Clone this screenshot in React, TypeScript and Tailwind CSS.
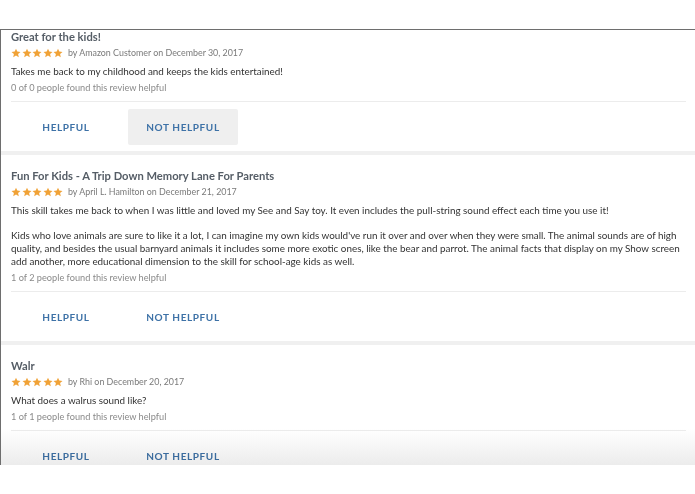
import React from 'react'

type Review = {
  title: string
  author: string
  date: string
  body: string[][]
  helpful: string
  hover?: boolean
}

const reviews: Review[] = [
  {
    title: 'Great for the kids!',
    author: 'Amazon Customer',
    date: 'December 30, 2017',
    body: [['Takes me back to my childhood and keeps the kids entertained!']],
    helpful: '0 of 0 people found this review helpful',
    hover: true,
  },
  {
    title: 'Fun For Kids - A Trip Down Memory Lane For Parents',
    author: 'April L. Hamilton',
    date: 'December 21, 2017',
    body: [
      [
        'This skill takes me back to when I was little and loved my See and Say toy. It even includes the pull-string sound effect each time you use it!',
      ],
      [
        "Kids who love animals are sure to like it a lot, I can imagine my own kids would've run it over and over when they were small. The animal sounds are of high",
        'quality, and besides the usual barnyard animals it includes some more exotic ones, like the bear and parrot. The animal facts that display on my Show screen',
        'add another, more educational dimension to the skill for school-age kids as well.',
      ],
    ],
    helpful: '1 of 2 people found this review helpful',
  },
  {
    title: 'Walr',
    author: 'Rhi',
    date: 'December 20, 2017',
    body: [['What does a walrus sound like?']],
    helpful: '1 of 1 people found this review helpful',
  },
]

function Star() {
  return (
    <svg width="10" height="10" viewBox="0 0 24 24" className="block">
      <path
        d="M12 1.5l3.1 7.1 7.7.7-5.8 5.1 1.7 7.6L12 18l-6.7 4 1.7-7.6L1.2 9.3l7.7-.7z"
        fill="#f0a237"
      />
    </svg>
  )
}

function ReviewCard({ review }: { review: Review }) {
  return (
    <div className="pl-[10px] pr-[9px]">
      <div className="h-[13px] leading-[13px] text-[11.2px] font-bold text-[#555d66]">
        {review.title}
      </div>
      <div className="mt-[3px] flex h-[13px] items-center">
        <div className="flex gap-[0.5px]">
          {[0, 1, 2, 3, 4].map((i) => (
            <Star key={i} />
          ))}
        </div>
        <span className="ml-[5px] text-[8.9px] leading-[13px] text-[#7a7a7a]">
          by {review.author} on {review.date}
        </span>
      </div>
      <div className="mt-[6px] text-[9.87px] leading-[13px] text-[#333]">
        {review.body.map((para, pi) => (
          <div key={pi} className={pi > 0 ? 'mt-[12px]' : ''}>
            {para.map((line, li) => (
              <div key={li} className="whitespace-nowrap">
                {line}
              </div>
            ))}
          </div>
        ))}
      </div>
      <div className="mt-[3px] text-[9.2px] leading-[13px] text-[#8a8a8a]">{review.helpful}</div>
      <div className="mt-[7px] h-px bg-[#ececec]" />
      <div className="mt-[7px] flex h-[36px] gap-[7px] text-[10px] font-bold tracking-[0.6px] text-[#3e72a7]">
        <div className="flex w-[110px] items-center justify-center rounded-[2px]">HELPFUL</div>
        <div
          className={
            'flex w-[110px] items-center justify-center rounded-[2px] ' +
            (review.hover ? 'bg-[#efefef]' : '')
          }
        >
          NOT HELPFUL
        </div>
      </div>
      <div className="h-[6px]" />
    </div>
  )
}

export default function App() {
  return (
    <div className="h-[494px] w-[695px] overflow-hidden bg-white font-['Lato','Liberation_Sans',sans-serif]">
      <div className="h-[29px]" />
      <div className="relative h-[436px] overflow-hidden border-l-[1.5px] border-t-[1.5px] border-[#6e6e6e]">
        {reviews.map((r, i) => (
          <div key={i}>
            {i > 0 && <div className="h-[14px]" />}
            <ReviewCard review={r} />
            <div className="h-[4px] bg-[#f0f0f0]" />
          </div>
        ))}
        {/* soft shading at the cropped bottom edge */}
        <div className="pointer-events-none absolute inset-x-0 bottom-0 h-[36px] bg-gradient-to-b from-white to-[#ececec] mix-blend-multiply" />
      </div>
    </div>
  )
}
